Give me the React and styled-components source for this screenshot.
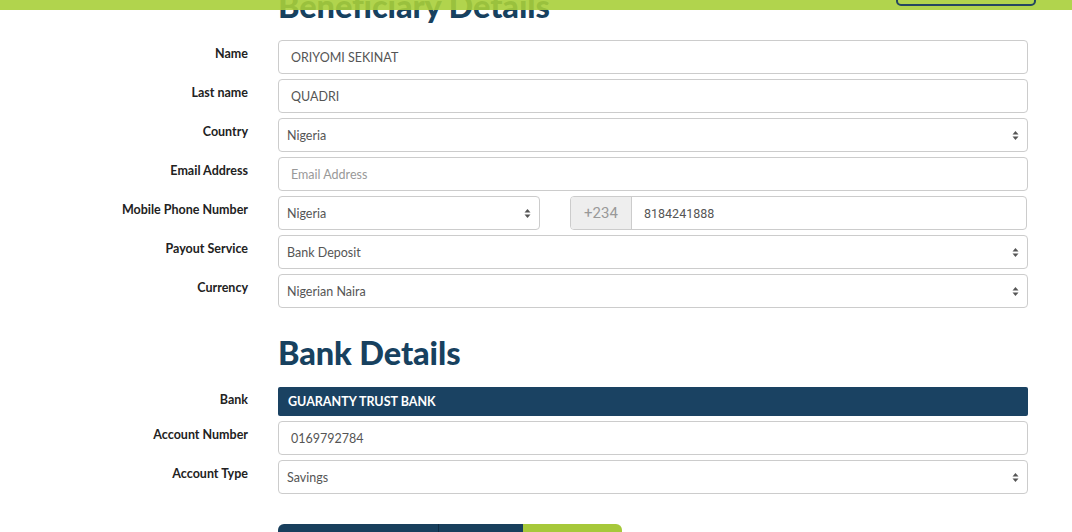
import React from 'react';
import styled, { createGlobalStyle } from 'styled-components';

const GlobalStyle = createGlobalStyle`
  html, body {
    margin: 0;
    padding: 0;
    background: #fff;
    overflow: hidden;
  }
  body {
    font-family: Lato, 'Open Sans', sans-serif;
    color: #333;
  }
`;

const TopBar = styled.header`
  position: fixed;
  top: 0;
  left: 0;
  right: 0;
  height: 10px;
  background: rgba(169, 207, 58, 0.9);
  display: flex;
  justify-content: flex-end;
  padding-right: 36px;
  overflow: hidden;
  z-index: 10;
`;

const LoginButton = styled.div`
  width: 136px;
  height: 30px;
  margin-top: -28px;
  border: 2px solid #244660;
  border-radius: 5px;
`;

const Page = styled.main`
  width: 1028px;
`;

const Heading = styled.h2`
  margin: ${(p) => (p.first ? '-14px 0 14px 278px' : '25px 0 14px 278px')};
  font-family: Lato, sans-serif;
  font-weight: 900;
  font-size: 32.5px;
  line-height: 40px;
  color: #17415f;
  letter-spacing: -0.1px;
`;

const Form = styled.div`
  display: grid;
  grid-template-columns: 248px 750px;
  column-gap: 30px;
  row-gap: 5px;
`;

const Label = styled.div`
  text-align: right;
  font-size: 12.5px;
  font-weight: 700;
  color: #222;
  line-height: 18px;
  padding-top: ${(p) => p.top || 5}px;
`;

const Box = styled.div`
  box-sizing: border-box;
  height: 34px;
  display: flex;
  align-items: center;
  justify-content: space-between;
  padding: 0 8px 0 ${(p) => p.pad || 8}px;
  border: 1px solid #ccc;
  border-radius: 4px;
  background: #fff;
  font-size: 12.5px;
  color: ${(p) => (p.placeholder ? '#999' : '#555')};
  font-family: Lato, sans-serif;
`;

const BankBar = styled.div`
  box-sizing: border-box;
  height: 29px;
  display: flex;
  align-items: center;
  padding-left: 10px;
  background: #1a4262;
  border-radius: 2px;
  color: #fff;
  font-size: 12.5px;
  font-weight: 700;
`;

const PhoneRow = styled.div`
  display: grid;
  grid-template-columns: 262px 457px;
  column-gap: 30px;
`;

const PhoneGroup = styled.div`
  display: flex;
  height: 34px;
  box-sizing: border-box;
  border: 1px solid #ccc;
  border-radius: 4px;
  overflow: hidden;
  font-family: Roboto, sans-serif;
`;

const Prefix = styled.div`
  width: 60px;
  display: flex;
  align-items: center;
  justify-content: center;
  background: #eee;
  border-right: 1px solid #ccc;
  color: #999;
  font-size: 15px;
`;

const PhoneInput = styled.div`
  flex: 1;
  display: flex;
  align-items: center;
  padding-left: 12px;
  font-size: 12.5px;
  color: #555;
`;

const Tabs = styled.div`
  display: flex;
  margin: 30px 0 0 278px;
`;

const Tab = styled.div`
  height: 40px;
  width: ${(p) => p.w}px;
  background: ${(p) => (p.green ? '#a6c83a' : '#183f5d')};
  border-left: ${(p) => (p.split ? '1px solid #0e2c44' : 'none')};
  border-radius: ${(p) => p.radius || '0'};
`;

const Arrows = () => (
  <svg width="7" height="11" viewBox="0 0 7 11">
    <path d="M3.5 1 L6.5 4.5 L0.5 4.5 Z" fill="#555" />
    <path d="M3.5 10 L6.5 6.5 L0.5 6.5 Z" fill="#555" />
  </svg>
);

const Select = ({ children }) => (
  <Box>
    <span>{children}</span>
    <Arrows />
  </Box>
);

const App = () => {
  return (
    <>
      <GlobalStyle />
      <TopBar>
        <LoginButton />
      </TopBar>
      <Page>
        <Heading first>Beneficiary Details</Heading>
        <Form>
          <Label>Name</Label>
          <Box pad={12}>ORIYOMI SEKINAT</Box>
          <Label>Last name</Label>
          <Box pad={12}>QUADRI</Box>
          <Label>Country</Label>
          <Select>Nigeria</Select>
          <Label>Email Address</Label>
          <Box pad={12} placeholder>Email Address</Box>
          <Label>Mobile Phone Number</Label>
          <PhoneRow>
            <Select>Nigeria</Select>
            <PhoneGroup>
              <Prefix>+234</Prefix>
              <PhoneInput>8184241888</PhoneInput>
            </PhoneGroup>
          </PhoneRow>
          <Label>Payout Service</Label>
          <Select>Bank Deposit</Select>
          <Label>Currency</Label>
          <Select>Nigerian Naira</Select>
        </Form>

        <Heading>Bank Details</Heading>
        <Form>
          <Label top={4}>Bank</Label>
          <BankBar>GUARANTY TRUST BANK</BankBar>
          <Label>Account Number</Label>
          <Box pad={12}>0169792784</Box>
          <Label>Account Type</Label>
          <Select>Savings</Select>
        </Form>

        <Tabs>
          <Tab w={160} radius="6px 0 0 0" />
          <Tab w={84} split />
          <Tab w={99} green radius="0 6px 0 0" />
        </Tabs>
      </Page>
    </>
  );
};

export default App;
